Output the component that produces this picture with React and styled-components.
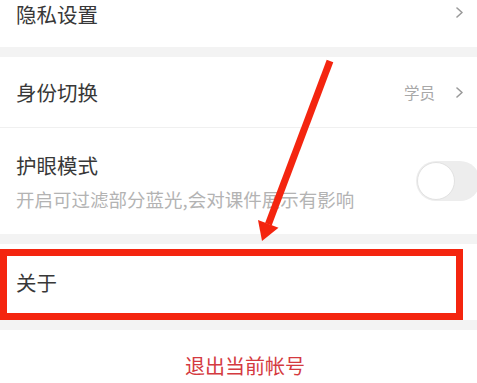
import React from 'react';
import styled, { createGlobalStyle } from 'styled-components';

const GlobalStyle = createGlobalStyle`
    html, body {
        margin: 0;
        padding: 0;
        background: #ffffff;
        overflow: hidden;
    }
    body {
        font-family: "Noto Sans CJK SC", "Noto Sans", sans-serif;
    }
`;

const Page = styled.div`
    position: relative;
    width: 490px;
    background: #ffffff;
`;

const Gap = styled.div`
    height: 10px;
    background: #f3f3f3;
`;

const Row = styled.div`
    position: relative;
    box-sizing: border-box;
    height: ${({ h }) => h}px;
    display: flex;
    align-items: ${({ top }) => top ? 'flex-start' : 'center'};
    padding: ${({ top }) => top ? '2px' : '0'} 27px 0 16px;
    border-bottom: ${({ divider }) => divider ? '1px solid #f0f0f0' : 'none'};
    background: #ffffff;
`;

const Title = styled.div`
    flex: 1;
    font-size: 20.5px;
    line-height: 24px;
    color: #383838;
`;

const Value = styled.span`
    font-size: 15.5px;
    line-height: 24px;
    color: #a8a8a8;
    margin-right: 21px;
`;

const Chevron = styled.svg`
    width: 7px;
    height: 11px;
    flex-shrink: 0;
    margin-top: ${({ up }) => up ? '5px' : '0'};
`;

const TextBlock = styled.div`
    flex: 1;
    display: flex;
    flex-direction: column;
    gap: 10px;
    padding-top: 2px;
`;

const Sub = styled.div`
    font-size: 18.5px;
    line-height: 24px;
    color: #b3b3b3;
    white-space: nowrap;
`;

const Switch = styled.div`
    position: relative;
    width: 64px;
    height: 40px;
    border-radius: 20px;
    background: #ededed;
    margin-right: -17px;
    flex-shrink: 0;
`;

const Knob = styled.div`
    position: absolute;
    left: 1px;
    top: 1px;
    width: 36px;
    height: 36px;
    border-radius: 50%;
    background: #ffffff;
    border: 1px solid #e2e2e2;
`;

const Highlight = styled.div`
    position: absolute;
    left: 0;
    top: 5px;
    width: 463px;
    height: 71px;
    box-sizing: border-box;
    border: 7px solid #f4250f;
    pointer-events: none;
`;

const Logout = styled.div`
    height: 70px;
    display: flex;
    align-items: center;
    justify-content: center;
    font-size: 20px;
    color: #d43a40;
    background: #ffffff;
`;

const Arrow = styled.svg`
    position: absolute;
    left: 0;
    top: 0;
    width: 490px;
    height: 400px;
    pointer-events: none;
`;

function Caret({ up }) {
    return (
        <Chevron up={up} viewBox="0 0 7 11">
            <polyline points="1,1 6,5.5 1,10" fill="none" stroke="#9a9a9a" strokeWidth="1.6" strokeLinecap="round" strokeLinejoin="round" />
        </Chevron>
    );
}

export default function App() {
    return (
        <Page>
            <GlobalStyle />
            <Row h={47} top>
                <Title>隐私设置</Title>
                <Caret up />
            </Row>
            <Gap />
            <Row h={71} divider>
                <Title>身份切换</Title>
                <Value>学员</Value>
                <Caret />
            </Row>
            <Row h={106}>
                <TextBlock>
                    <Title>护眼模式</Title>
                    <Sub>开启可过滤部分蓝光,会对课件展示有影响</Sub>
                </TextBlock>
                <Switch>
                    <Knob />
                </Switch>
            </Row>
            <Gap />
            <Row h={76}>
                <Title>关于</Title>
                <Highlight />
            </Row>
            <Gap />
            <Logout>退出当前帐号</Logout>
            <Arrow viewBox="0 0 490 400">
                <line x1="330" y1="61" x2="268.4" y2="224.2" stroke="#f4250f" strokeWidth="7" />
                <polygon points="262,241 258,220 278.5,227.8" fill="#f4250f" />
            </Arrow>
        </Page>
    );
}
